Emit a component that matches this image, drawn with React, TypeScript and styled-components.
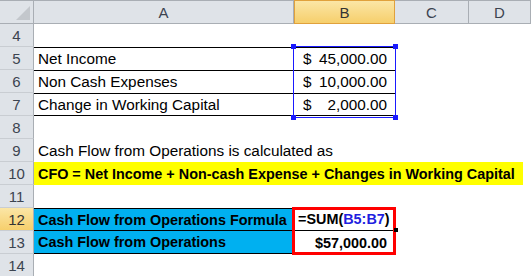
import styled, { createGlobalStyle, css } from "styled-components";

const GlobalStyle = createGlobalStyle`
    html, body {
        margin: 0;
        padding: 0;
        background: #ffffff;
    }
    body {
        font-family: "Liberation Sans", Arial, sans-serif;
        color: #000000;
        overflow: hidden;
    }
`;

const columns = "34px 260px 101px 74px 62px";
const headerBg = "#dfe3e8";
const headerLine = "#a9aeb4";

const Sheet = styled.div`
    display: flex;
    flex-direction: column;
    width: 531px;
    height: 276px;
    overflow: hidden;
`;

const Row = styled.div<{ $head?: boolean }>`
    display: grid;
    grid-template-columns: ${columns};
    height: ${(p) => (p.$head ? 24 : 23)}px;
    flex-shrink: 0;
`;

// groups of rows that carry an overlay (selection box, red frame)
const Block = styled.div`
    position: relative;
    display: flex;
    flex-direction: column;
`;

const Corner = styled.div`
    position: relative;
    background: ${headerBg};
    border-top: 1px solid ${headerLine};
    border-right: 1px solid ${headerLine};
    border-bottom: 1px solid ${headerLine};
    box-sizing: border-box;
    &::after {
        content: "";
        position: absolute;
        right: 3px;
        bottom: 3px;
        width: 0;
        height: 0;
        border-left: 14px solid transparent;
        border-bottom: 14px solid #c3c7cc;
    }
`;

const activeHeader = css`
    background: linear-gradient(#fbe6a6, #f6cf6c);
    color: #333333;
`;

const ColHeader = styled.div<{ $active?: boolean }>`
    display: flex;
    align-items: center;
    justify-content: center;
    box-sizing: border-box;
    background: ${headerBg};
    border-top: 1px solid ${headerLine};
    border-right: 1px solid ${headerLine};
    border-bottom: 1px solid ${headerLine};
    color: #3c4450;
    font-size: 15px;
    ${(p) =>
        p.$active &&
        css`
            ${activeHeader};
            border: 1px solid #e0a13c;
        `}
`;

const RowHeader = styled.div<{ $active?: boolean }>`
    display: flex;
    align-items: center;
    justify-content: center;
    box-sizing: border-box;
    background: ${headerBg};
    border-right: 1px solid ${headerLine};
    border-bottom: 1px solid #c9cdd2;
    color: #3c4450;
    font-size: 15px;
    ${(p) => p.$active && activeHeader};
`;

const Cell = styled.div<{
    $fill?: string;
    $bold?: boolean;
    $top?: boolean;
    $bottom?: boolean;
    $span?: number;
    $align?: "left" | "right" | "split";
}>`
    display: flex;
    align-items: center;
    box-sizing: border-box;
    padding: 0 4px;
    font-size: ${(p) => (p.$bold ? 14.4 : 15.3)}px;
    white-space: nowrap;
    overflow: visible;
    background: ${(p) => p.$fill || "transparent"};
    font-weight: ${(p) => (p.$bold ? 700 : 400)};
    border-top: ${(p) => (p.$top ? "1px solid #000" : "none")};
    border-bottom: ${(p) => (p.$bottom ? "1px solid #000" : "none")};
    grid-column: ${(p) => (p.$span ? `span ${p.$span}` : "auto")};
    justify-content: ${(p) =>
        p.$align === "right"
            ? "flex-end"
            : p.$align === "split"
              ? "space-between"
              : "flex-start"};
`;

const Money = styled(Cell)`
    padding: 0 8px 0 9px;
`;

const Highlight = styled.div`
    display: flex;
    align-items: center;
    width: 489px;
    height: 100%;
    padding: 0 4px;
    box-sizing: border-box;
    background: #ffff00;
    font-weight: 700;
    font-size: 14.4px;
    white-space: nowrap;
`;

const RangeRef = styled.span`
    color: #1f1fe0;
`;

// blue selection rectangle over B5:B7
const Selection = styled.div`
    position: absolute;
    left: 293px;
    top: -1px;
    width: 101px;
    height: 70px;
    border: 1px solid #1a1aff;
    pointer-events: none;
`;

const Handle = styled.span<{ $x: "left" | "right"; $y: "top" | "bottom" }>`
    position: absolute;
    width: 5px;
    height: 5px;
    background: #1a1aff;
    ${(p) => p.$x}: -3px;
    ${(p) => p.$y}: -3px;
`;

// red frame round B12:B13
const Frame = styled.div`
    position: absolute;
    left: 292px;
    top: -1px;
    width: 104px;
    height: 48px;
    box-sizing: border-box;
    border: 3px solid #ff0000;
    pointer-events: none;
`;

const FillHandle = styled.span`
    position: absolute;
    right: -5px;
    top: 18px;
    width: 4px;
    height: 4px;
    background: #000;
`;

const Blank = styled.div``;

function MoneyCell({ value, top, bottom }: { value: string; top?: boolean; bottom?: boolean }) {
    return (
        <Money $top={top} $bottom={bottom} $align="split">
            <span>$</span>
            <span>{value}</span>
        </Money>
    );
}

function App() {
    return (
        <>
            <GlobalStyle />
            <Sheet>
                <Row $head>
                    <Corner />
                    <ColHeader>A</ColHeader>
                    <ColHeader $active>B</ColHeader>
                    <ColHeader>C</ColHeader>
                    <ColHeader>D</ColHeader>
                </Row>

                <Row>
                    <RowHeader>4</RowHeader>
                    <Cell $span={4} />
                </Row>

                <Block>
                    <Row>
                        <RowHeader>5</RowHeader>
                        <Cell $top>Net Income</Cell>
                        <MoneyCell top value="45,000.00" />
                        <Blank />
                        <Blank />
                    </Row>
                    <Row>
                        <RowHeader>6</RowHeader>
                        <Cell $top>Non Cash Expenses</Cell>
                        <MoneyCell top value="10,000.00" />
                        <Blank />
                        <Blank />
                    </Row>
                    <Row>
                        <RowHeader>7</RowHeader>
                        <Cell $top $bottom>
                            Change in Working Capital
                        </Cell>
                        <MoneyCell top bottom value={"\u00a0\u00a0\u00a02,000.00"} />
                        <Blank />
                        <Blank />
                    </Row>
                    <Selection>
                        <Handle $x="left" $y="top" />
                        <Handle $x="right" $y="top" />
                        <Handle $x="left" $y="bottom" />
                        <Handle $x="right" $y="bottom" />
                    </Selection>
                </Block>

                <Row>
                    <RowHeader>8</RowHeader>
                    <Cell $span={4} />
                </Row>
                <Row>
                    <RowHeader>9</RowHeader>
                    <Cell $span={4}>Cash Flow from Operations is calculated as</Cell>
                </Row>
                <Row>
                    <RowHeader>10</RowHeader>
                    <Cell $span={4} style={{ padding: 0 }}>
                        <Highlight>
                            CFO = Net Income + Non-cash Expense + Changes in Working Capital
                        </Highlight>
                    </Cell>
                </Row>
                <Row>
                    <RowHeader>11</RowHeader>
                    <Cell $span={4} />
                </Row>

                <Block>
                    <Row>
                        <RowHeader $active>12</RowHeader>
                        <Cell $fill="#00b0f0" $bold $top $bottom>
                            Cash Flow from Operations Formula
                        </Cell>
                        <Cell $bold $bottom>
                            =SUM(<RangeRef>B5:B7</RangeRef>)
                        </Cell>
                        <Blank />
                        <Blank />
                    </Row>
                    <Row>
                        <RowHeader>13</RowHeader>
                        <Cell $fill="#00b0f0" $bold $bottom>
                            Cash Flow from Operations
                        </Cell>
                        <Money $bold $align="right">
                            $57,000.00
                        </Money>
                        <Blank />
                        <Blank />
                    </Row>
                    <Frame>
                        <FillHandle />
                    </Frame>
                </Block>

                <Row>
                    <RowHeader>14</RowHeader>
                    <Cell $span={4} />
                </Row>
            </Sheet>
        </>
    );
}

export default App;
